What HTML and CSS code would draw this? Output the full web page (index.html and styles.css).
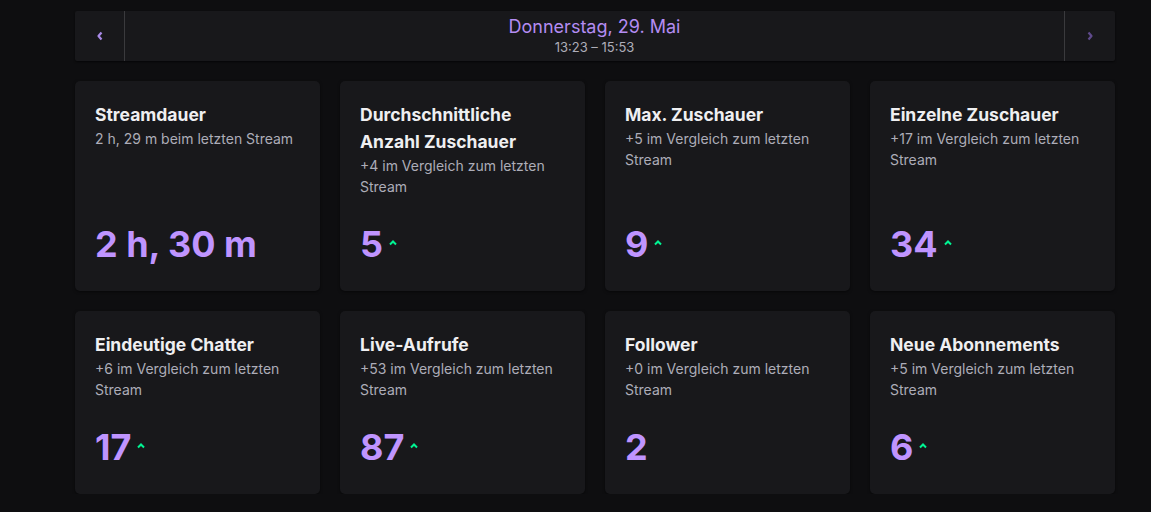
FILE: index.html
```html
<!DOCTYPE html>
<html lang="de">
<head>
<meta charset="utf-8">
<link rel="stylesheet" href="styles.css">
</head>
<body>
<div class="page">
  <div class="date-nav">
    <button class="nav-btn prev" aria-label="Zurück">
      <svg width="8" height="10" viewBox="0 0 8 10"><path d="M5.5 1.5 L2.5 5 L5.5 8.5" fill="none" stroke="currentColor" stroke-width="2.2" stroke-linejoin="round"/></svg>
    </button>
    <div class="date-center">
      <div class="date-title">Donnerstag, 29. Mai</div>
      <div class="date-time">13:23 – 15:53</div>
    </div>
    <button class="nav-btn next" aria-label="Weiter">
      <svg width="8" height="10" viewBox="0 0 8 10"><path d="M2.5 1.5 L5.5 5 L2.5 8.5" fill="none" stroke="currentColor" stroke-width="2.2" stroke-linejoin="round"/></svg>
    </button>
  </div>

  <div class="grid">
    <div class="card">
      <div class="card-title">Streamdauer</div>
      <div class="card-sub">2 h, 29 m beim letzten Stream</div>
      <div class="card-value"><span>2 h, 30 m</span></div>
    </div>
    <div class="card">
      <div class="card-title">Durchschnittliche Anzahl Zuschauer</div>
      <div class="card-sub">+4 im Vergleich zum letzten Stream</div>
      <div class="card-value"><span>5</span><svg class="up" width="10" height="8" viewBox="0 0 10 8"><path d="M2 5.5 L5 2.5 L8 5.5" fill="none" stroke="currentColor" stroke-width="2"/></svg></div>
    </div>
    <div class="card">
      <div class="card-title">Max. Zuschauer</div>
      <div class="card-sub">+5 im Vergleich zum letzten Stream</div>
      <div class="card-value"><span>9</span><svg class="up" width="10" height="8" viewBox="0 0 10 8"><path d="M2 5.5 L5 2.5 L8 5.5" fill="none" stroke="currentColor" stroke-width="2"/></svg></div>
    </div>
    <div class="card">
      <div class="card-title">Einzelne Zuschauer</div>
      <div class="card-sub">+17 im Vergleich zum letzten Stream</div>
      <div class="card-value"><span>34</span><svg class="up" width="10" height="8" viewBox="0 0 10 8"><path d="M2 5.5 L5 2.5 L8 5.5" fill="none" stroke="currentColor" stroke-width="2"/></svg></div>
    </div>
    <div class="card">
      <div class="card-title">Eindeutige Chatter</div>
      <div class="card-sub">+6 im Vergleich zum letzten Stream</div>
      <div class="card-value"><span>17</span><svg class="up" width="10" height="8" viewBox="0 0 10 8"><path d="M2 5.5 L5 2.5 L8 5.5" fill="none" stroke="currentColor" stroke-width="2"/></svg></div>
    </div>
    <div class="card">
      <div class="card-title">Live-Aufrufe</div>
      <div class="card-sub">+53 im Vergleich zum letzten Stream</div>
      <div class="card-value"><span>87</span><svg class="up" width="10" height="8" viewBox="0 0 10 8"><path d="M2 5.5 L5 2.5 L8 5.5" fill="none" stroke="currentColor" stroke-width="2"/></svg></div>
    </div>
    <div class="card">
      <div class="card-title">Follower</div>
      <div class="card-sub">+0 im Vergleich zum letzten Stream</div>
      <div class="card-value"><span>2</span></div>
    </div>
    <div class="card">
      <div class="card-title">Neue Abonnements</div>
      <div class="card-sub">+5 im Vergleich zum letzten Stream</div>
      <div class="card-value"><span>6</span><svg class="up" width="10" height="8" viewBox="0 0 10 8"><path d="M2 5.5 L5 2.5 L8 5.5" fill="none" stroke="currentColor" stroke-width="2"/></svg></div>
    </div>
  </div>
</div>
</body>
</html>
```

FILE: styles.css
```css
* { box-sizing: border-box; }
html, body {
  margin: 0;
  background: #0e0e10;
  font-family: Inter, "Noto Sans", sans-serif;
  color: #efeff1;
}
.page {
  width: 1040px;
  margin-left: 75px;
  padding-top: 11px;
}
.date-nav {
  display: flex;
  height: 50px;
  background: #18181b;
  border-radius: 2px;
  box-shadow: 0 1px 2px rgba(0,0,0,0.6);
}
.nav-btn {
  width: 50px;
  flex: none;
  background: transparent;
  border: 0;
  padding: 0;
  display: flex;
  align-items: center;
  justify-content: center;
  color: #a98ae8;
}
.nav-btn.prev { border-right: 1px solid #3a3a3d; }
.nav-btn.next { border-left: 1px solid #3a3a3d; color: #5f4a8c; width: 51px; }
.date-center {
  flex: 1;
  display: flex;
  flex-direction: column;
  align-items: center;
  justify-content: center;
}
.date-title {
  font-size: 18px;
  line-height: 22px;
  color: #b48cf2;
}
.date-time {
  font-size: 13px;
  line-height: 18px;
  color: #adadb8;
}
.grid {
  margin-top: 20px;
  display: grid;
  grid-template-columns: repeat(4, 1fr);
  gap: 20px;
}
.card {
  background: #18181b;
  border-radius: 5px;
  padding: 20px;
  display: flex;
  flex-direction: column;
  box-shadow: 0 1px 3px rgba(0,0,0,0.5);
}
.card-title {
  font-size: 17.5px;
  font-weight: 700;
  line-height: 27px;
  color: #efeff1;
}
.card-sub {
  font-size: 14px;
  line-height: 21px;
  color: #adadb8;
}
.card-value {
  margin-top: auto;
  padding-top: 20px;
  display: flex;
  align-items: center;
  font-size: 36px;
  font-weight: 700;
  line-height: 54px;
  color: #bf94ff;
}
.up {
  color: #00f593;
  margin-left: 5px;
  margin-top: -2px;
}
```
